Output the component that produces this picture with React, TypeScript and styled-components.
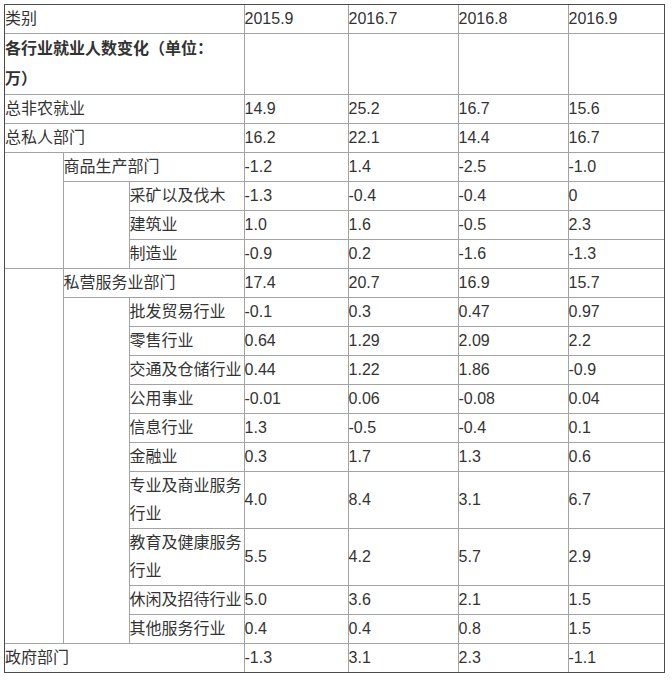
import React from "react";
import styled, { createGlobalStyle } from "styled-components";

const GlobalStyle = createGlobalStyle`
  html, body { margin: 0; padding: 0; background: #fff; }
  body {
    font-family: "Liberation Sans", Arial, "Noto Sans CJK SC", sans-serif;
    font-size: 16px;
    color: #333;
    text-spacing-trim: space-all;
  }
`;

const Page = styled.div`
  padding: 4px 0 0 4px;
`;

const Frame = styled.div`
  display: inline-block;
  border: 1px solid #4a4a4a;
`;

const Table = styled.table`
  border-collapse: collapse;
  border-style: hidden;
  table-layout: fixed;
  width: 659px;
`;

const Col = styled.col<{ $w?: number }>`
  width: ${(p) => (p.$w ? `${p.$w}px` : "auto")};
`;

const Cell = styled.td<{ $bold?: boolean }>`
  border: 1px solid #a3a3a3;
  padding: 0;
  line-height: ${(p) => (p.$bold ? "30px" : "28px")};
  vertical-align: middle;
  text-align: left;
  font-weight: ${(p) => (p.$bold ? 700 : 400)};
  color: #333;
  white-space: normal;
  text-spacing-trim: space-all;
`;

type Row = {
  label: string;
  level: 0 | 1 | 2;
  values: string[];
  bold?: boolean;
  groupA?: number;
  groupB?: number;
};

const colWidths = [58, 66, 115, 104, 110, 110, 0];

const rows: Row[] = [
  { label: "类别", level: 0, values: ["2015.9", "2016.7", "2016.8", "2016.9"] },
  { label: "各行业就业人数变化（单位：万）", level: 0, values: ["", "", "", ""], bold: true },
  { label: "总非农就业", level: 0, values: ["14.9", "25.2", "16.7", "15.6"] },
  { label: "总私人部门", level: 0, values: ["16.2", "22.1", "14.4", "16.7"] },
  { label: "商品生产部门", level: 1, values: ["-1.2", "1.4", "-2.5", "-1.0"], groupA: 4 },
  { label: "采矿以及伐木", level: 2, values: ["-1.3", "-0.4", "-0.4", "0"], groupB: 3 },
  { label: "建筑业", level: 2, values: ["1.0", "1.6", "-0.5", "2.3"] },
  { label: "制造业", level: 2, values: ["-0.9", "0.2", "-1.6", "-1.3"] },
  { label: "私营服务业部门", level: 1, values: ["17.4", "20.7", "16.9", "15.7"], groupA: 11 },
  { label: "批发贸易行业", level: 2, values: ["-0.1", "0.3", "0.47", "0.97"], groupB: 10 },
  { label: "零售行业", level: 2, values: ["0.64", "1.29", "2.09", "2.2"] },
  { label: "交通及仓储行业", level: 2, values: ["0.44", "1.22", "1.86", "-0.9"] },
  { label: "公用事业", level: 2, values: ["-0.01", "0.06", "-0.08", "0.04"] },
  { label: "信息行业", level: 2, values: ["1.3", "-0.5", "-0.4", "0.1"] },
  { label: "金融业", level: 2, values: ["0.3", "1.7", "1.3", "0.6"] },
  { label: "专业及商业服务行业", level: 2, values: ["4.0", "8.4", "3.1", "6.7"] },
  { label: "教育及健康服务行业", level: 2, values: ["5.5", "4.2", "5.7", "2.9"] },
  { label: "休闲及招待行业", level: 2, values: ["5.0", "3.6", "2.1", "1.5"] },
  { label: "其他服务行业", level: 2, values: ["0.4", "0.4", "0.8", "1.5"] },
  { label: "政府部门", level: 0, values: ["-1.3", "3.1", "2.3", "-1.1"] },
];

export default function App() {
  return (
    <>
      <GlobalStyle />
      <Page>
        <Frame>
          <Table>
            <colgroup>
              {colWidths.map((w, i) => (
                <Col key={i} $w={w} />
              ))}
            </colgroup>
            <tbody>
              {rows.map((r, i) => (
                <tr key={i}>
                  {r.groupA ? <Cell rowSpan={r.groupA} /> : null}
                  {r.groupB ? <Cell rowSpan={r.groupB} /> : null}
                  <Cell colSpan={3 - r.level} $bold={r.bold}>
                    {r.label}
                  </Cell>
                  {r.values.map((v, j) => (
                    <Cell key={j}>{v}</Cell>
                  ))}
                </tr>
              ))}
            </tbody>
          </Table>
        </Frame>
      </Page>
    </>
  );
}
